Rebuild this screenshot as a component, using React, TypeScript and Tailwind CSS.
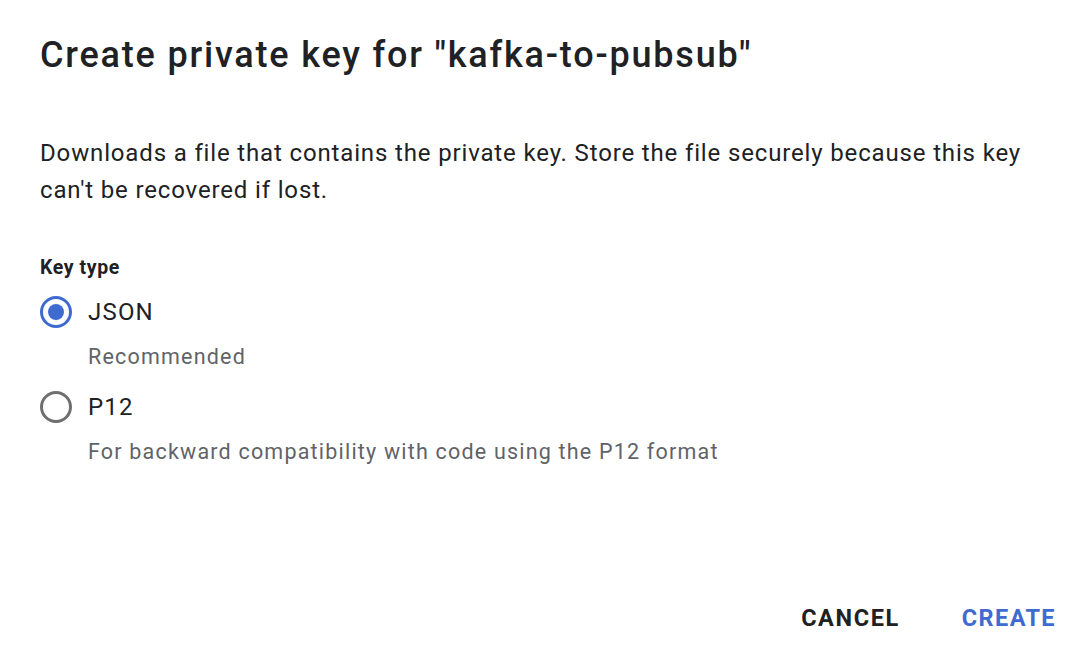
import { useState } from 'react';

const options = [
  { id: 'json', label: 'JSON', hint: 'Recommended' },
  { id: 'p12', label: 'P12', hint: 'For backward compatibility with code using the P12 format' },
];

export default function App() {
  const [keyType, setKeyType] = useState('json');

  return (
    <div className="flex h-[648px] w-[1072px] flex-col bg-white font-['Roboto',sans-serif] text-[#202124]">
      <h1 className="pl-10 pt-[33px] text-[36px] font-medium leading-[44px] tracking-[1.8px]">
        Create private key for "kafka-to-pubsub"
      </h1>

      <p className="mt-[58px] pl-10 pr-8 text-[24px] leading-[37px] tracking-[0.85px]">
        Downloads a file that contains the private key. Store the file securely because this key
        can't be recovered if lost.
      </p>

      <div className="mt-[47px] pl-10">
        <div className="text-[19.5px] font-bold leading-[24px] tracking-[0.6px]">Key type</div>
        <div className="mt-[12px] flex flex-col gap-[13px]">
          {options.map((o) => {
            const checked = keyType === o.id;
            return (
              <label key={o.id} className="flex cursor-pointer flex-col" onClick={() => setKeyType(o.id)}>
                <span className="flex h-[40px] items-center gap-[16px]">
                  {checked ? (
                    <span className="flex h-[32px] w-[32px] items-center justify-center rounded-full border-[3px] border-[#3f6bd0]">
                      <span className="h-[16px] w-[16px] rounded-full bg-[#3f6bd0]" />
                    </span>
                  ) : (
                    <span className="h-[32px] w-[32px] rounded-full border-[3px] border-[#6f6f6f]" />
                  )}
                  <span className="text-[24px] tracking-[1.2px]">{o.label}</span>
                </span>
                <span className="mt-[8px] pl-[48px] text-[21.5px] leading-[34px] tracking-[1.2px] text-[#5f6368]">
                  {o.hint}
                </span>
              </label>
            );
          })}
        </div>
      </div>

      <div className="mt-auto flex items-center justify-end gap-[62px] pb-[12px] pr-[16px]">
        <button className="text-[23.5px] font-bold tracking-[1.6px] text-[#202124]">CANCEL</button>
        <button className="text-[23.5px] font-bold tracking-[1.4px] text-[#3f6bd0]">CREATE</button>
      </div>
    </div>
  );
}
